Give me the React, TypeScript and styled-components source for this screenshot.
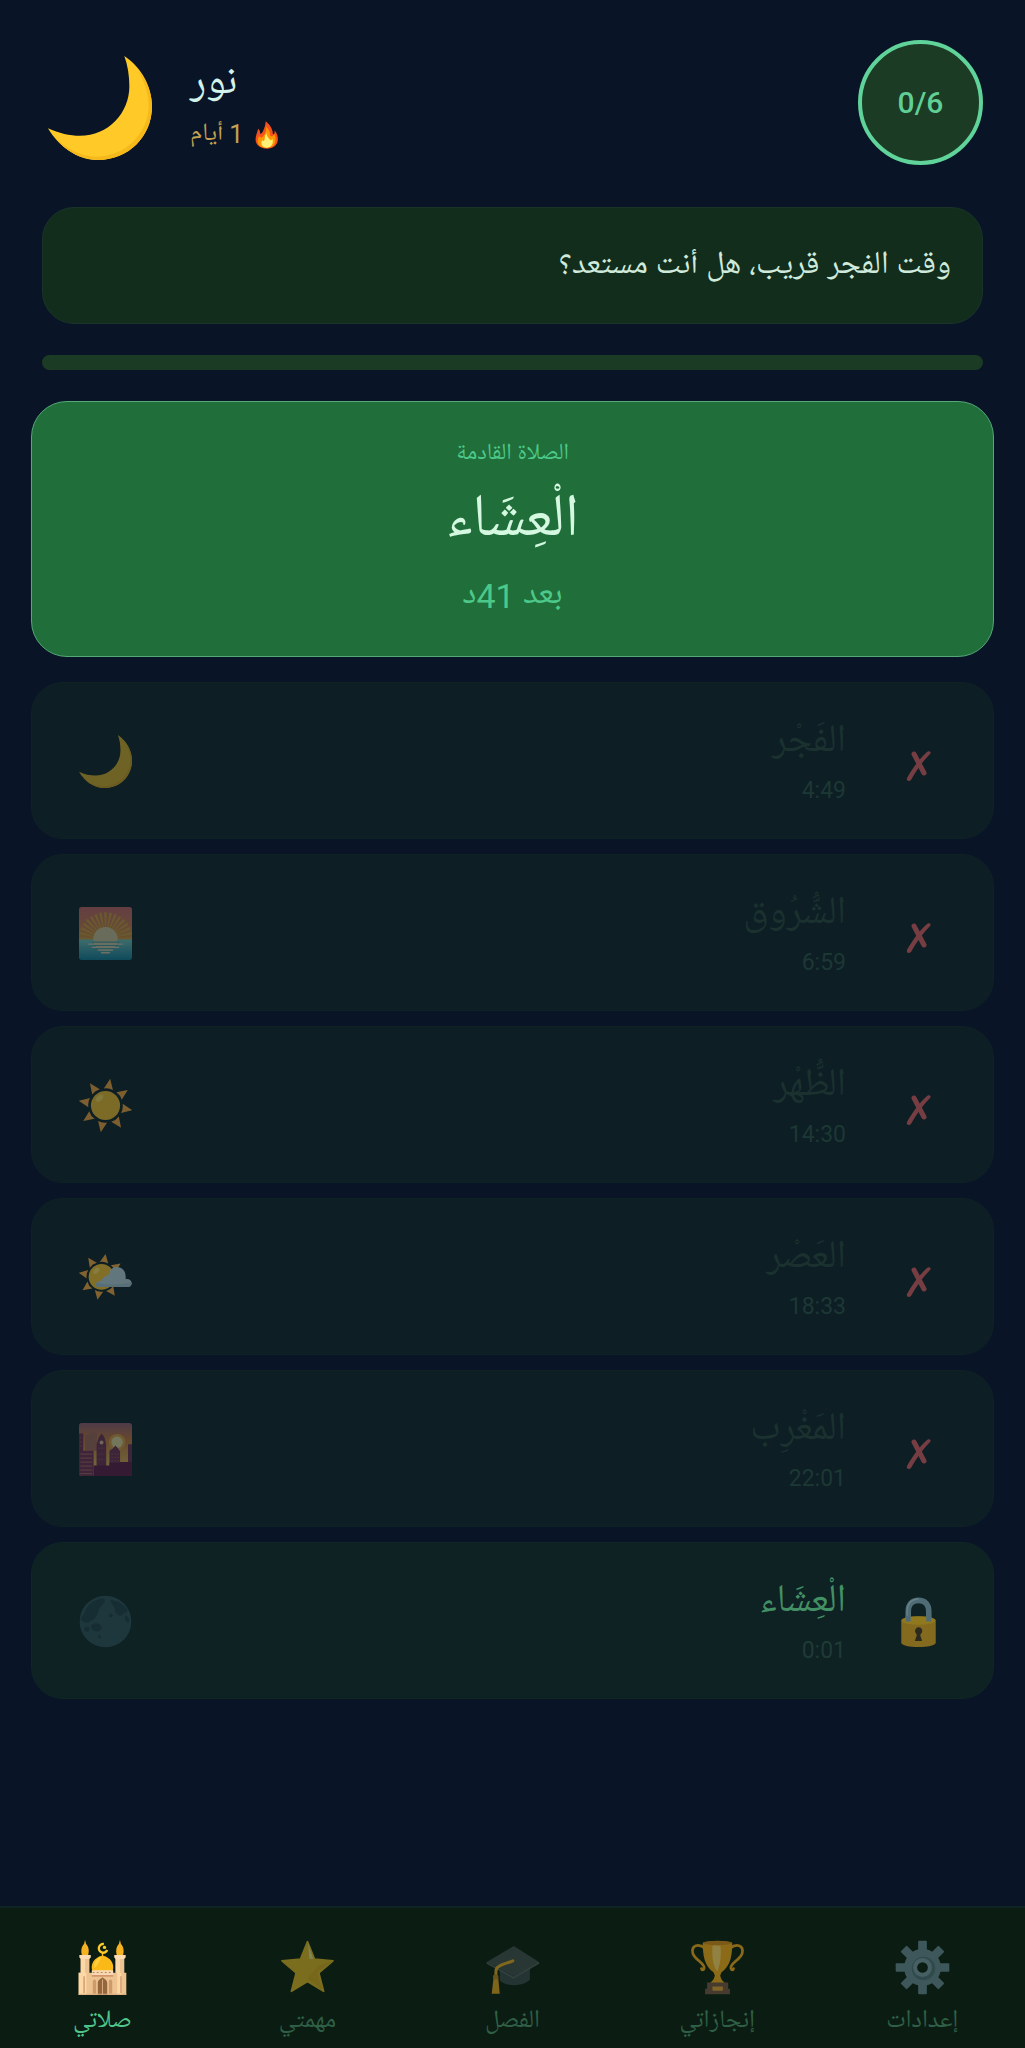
import React from "react";
import styled, { createGlobalStyle } from "styled-components";

const GlobalStyle = createGlobalStyle`
  *, *::before, *::after { box-sizing: border-box; }
  body {
    margin: 0;
    background: #091527;
    font-family: Roboto, "Noto Naskh Arabic UI", "Noto Naskh Arabic", "Noto Sans Arabic", "DejaVu Sans", sans-serif;
  }
  h1, h2, p, ul { margin: 0; padding: 0; font-weight: 400; }
`;

const Screen = styled.div`
  min-height: 100vh;
  display: flex;
  flex-direction: column;
  background: #091527;
`;

const Header = styled.header`
  display: flex;
  align-items: center;
  gap: 38px;
  padding: 40px 42px 42px 48px;
`;

const Avatar = styled.div`
  padding-top: 10px;
`;

const Profile = styled.div`
  flex: 1;
  display: flex;
  flex-direction: column;
  align-items: flex-start;
  padding-top: 8px;
`;

const Name = styled.h1`
  font-size: 42px;
  line-height: 56px;
  color: #d3f2ea;
`;

const Streak = styled.p`
  display: flex;
  align-items: center;
  gap: 10px;
  font-size: 25px;
  line-height: 44px;
  color: #c4a052;
`;

const Counter = styled.div`
  width: 125px;
  height: 125px;
  display: flex;
  align-items: center;
  justify-content: center;
  border: 4px solid #5fd39a;
  border-radius: 50%;
  background: #1b3b24;
  color: #5fcf96;
  font-size: 30px;
  font-weight: 500;
`;

const Bubble = styled.p`
  margin: 0 42px;
  padding: 31px 31px 29px;
  border: 1px solid #1a3329;
  border-radius: 32px;
  background: #132d1d;
  color: #cfeadb;
  font-size: 32px;
  line-height: 55px;
`;

const Progress = styled.div`
  height: 15px;
  margin: 31px 42px;
  border-radius: 8px;
  background: #1b3b24;
`;

const NextCard = styled.section`
  margin: 0 31px 25px;
  padding: 35px 32px 37px;
  display: flex;
  flex-direction: column;
  align-items: center;
  border: 1px solid #55a878;
  border-radius: 36px;
  background: #206e3a;
  color: #4cc98a;
`;

const NextLabel = styled.p`
  font-size: 23px;
  line-height: 36px;
`;

const NextName = styled.h2`
  font-size: 60px;
  line-height: 100px;
  color: #d4f8e0;
`;

const NextTime = styled.p`
  font-size: 34px;
  line-height: 46px;
`;

const PrayerList = styled.ul`
  flex: 1;
  display: flex;
  flex-direction: column;
  gap: 15px;
  padding: 0 31px 100px;
  list-style: none;
`;

const PrayerRow = styled.li<{ $current: boolean }>`
  display: flex;
  align-items: center;
  gap: 44px;
  padding: 31px 47px 29px;
  border: 1px solid ${(p) => (p.$current ? "#0f2623" : "#0e2225")};
  border-radius: 32px;
  background: ${(p) => (p.$current ? "#0e2123" : "#0d1e24")};
`;

const PrayerText = styled.div`
  flex: 1;
  display: flex;
  flex-direction: column;
  text-align: right;
`;

const PrayerName = styled.h2<{ $current: boolean }>`
  font-size: 39px;
  line-height: 59px;
  color: ${(p) => (p.$current ? "#439065" : "#1a312f")};
`;

const PrayerTime = styled.p<{ $current: boolean }>`
  font-size: 23px;
  line-height: 36px;
  color: ${(p) => (p.$current ? "#1e3b36" : "#1c3834")};
`;

const Mark = styled.span`
  width: 56px;
  display: flex;
  justify-content: center;
  align-items: center;
  padding-top: 3px;
`;

const NavBar = styled.nav`
  display: flex;
  padding: 32px 0 3px;
  border-top: 2px solid #0e2422;
  background: #0b1d12;
`;

const NavItem = styled.button<{ $active: boolean }>`
  flex: 1;
  display: flex;
  flex-direction: column;
  align-items: center;
  gap: 4px;
  padding: 0;
  border: 0;
  background: none;
  font: inherit;
  font-size: 25px;
  line-height: 46px;
  color: ${(p) => (p.$active ? "#4fc78c" : "#2f5f46")};
`;

const Art = styled.svg<{ $size: number; $opacity?: number }>`
  display: block;
  flex: none;
  width: ${(p) => p.$size}px;
  height: ${(p) => p.$size}px;
  opacity: ${(p) => p.$opacity ?? 1};
`;

type IconProps = { size?: number; opacity?: number };

const Moon = ({ size = 53, opacity }: IconProps) => (
  <Art $size={size} $opacity={opacity} viewBox="0 0 124 124" aria-hidden="true">
    <path fill="#ffca28" d="M91 0C111 13 124 36 124 60C124 96 96 124 60 124C35 124 13 108 0 86C13 92 26 95 38 95C72 95 97 68 97 36C97 23 95 11 91 0Z" />
    <path fill="#f6b91c" d="M107 17C118 29 124 44 124 60C124 96 96 124 60 124C39 124 20 113 8 97C22 111 39 120 58 120C92 120 119 93 120 60C120 44 115 30 107 17Z" />
  </Art>
);

const Fire = ({ size = 28 }: IconProps) => (
  <Art $size={size} viewBox="0 0 88 88" aria-hidden="true">
    <path fill="#f4511e" d="M40 1C47 7 58 17 61 31C63 36 61 41 64 42C68 41 69 34 67 29C76 38 79 50 78 60C77 77 63 87 44 87C24 87 9 77 8 59C8 45 14 36 16 24C22 29 23 35 22 40C26 41 29 37 31 33C35 24 39 15 40 1Z" />
    <path fill="#ff9800" d="M41 17C49 26 54 34 54 46C58 51 63 48 67 42C73 54 72 70 63 78C52 87 31 87 21 78C13 70 14 57 19 47C22 52 26 53 29 50C37 43 43 34 41 17Z" />
    <path fill="#fff176" d="M42 37C43 50 49 52 54 60C57 62 59 59 61 56C65 68 60 83 44 84C28 84 23 72 29 60C31 65 35 64 36 60C38 53 37 45 42 37Z" />
  </Art>
);

const Sunrise = ({ opacity }: IconProps) => (
  <Art $size={53} $opacity={opacity} viewBox="0 0 160 160" aria-hidden="true">
    <defs>
      <linearGradient id="dawnSky" x1="0" y1="0" x2="0" y2="1">
        <stop offset="0" stopColor="#dd6a70" />
        <stop offset="1" stopColor="#e9963c" />
      </linearGradient>
      <linearGradient id="dawnSea" x1="0" y1="0" x2="0" y2="1">
        <stop offset="0" stopColor="#80d8d0" />
        <stop offset="1" stopColor="#1287a8" />
      </linearGradient>
      <clipPath id="dawnFrame"><rect width="160" height="160" rx="8" /></clipPath>
    </defs>
    <g clipPath="url(#dawnFrame)">
      <rect width="160" height="100" fill="url(#dawnSky)" />
      {Array.from({ length: 17 }, (_, i) => (
        <path key={i} fill="#e6ad3c" d="M80 97L76 16L84 16Z" transform={`rotate(${-88 + i * 11} 80 97)`} />
      ))}
      <rect y="98" width="160" height="62" fill="url(#dawnSea)" />
      <circle cx="80" cy="97" r="37" fill="#e8d9a8" />
      <path stroke="#4fb0b0" strokeWidth="4" d="M40 106H120M42 116H118M50 126H110M62 134H98" />
      <path stroke="#efe2c0" strokeWidth="4" strokeLinecap="round" d="M28 112H132M40 122H120M58 130H102M68 138H92" />
    </g>
  </Art>
);

const Rays = ({ cx, cy, inner, outer, half }: { cx: number; cy: number; inner: number; outer: number; half: number }) => (
  <>
    {Array.from({ length: 8 }, (_, i) => (
      <path
        key={i}
        fill="#f5a53c"
        d={`M${cx} ${cy - outer}L${cx + half} ${cy - inner}Q${cx} ${cy - inner - 5} ${cx - half} ${cy - inner}Z`}
        transform={`rotate(${10 + i * 45} ${cx} ${cy})`}
      />
    ))}
  </>
);

const Sun = ({ opacity }: IconProps) => (
  <Art $size={53} $opacity={opacity} viewBox="0 0 160 160" aria-hidden="true">
    <Rays cx={80} cy={80} inner={50} outer={82} half={14} />
    <circle cx="80" cy="80" r="44" fill="#f5be2b" />
    <ellipse cx="62" cy="58" rx="13" ry="8" fill="#ffdc58" transform="rotate(-45 62 58)" />
  </Art>
);

const SunCloud = ({ opacity }: IconProps) => (
  <Art $size={53} $opacity={opacity} viewBox="0 0 160 160" aria-hidden="true">
    <Rays cx={68} cy={78} inner={43} outer={70} half={13} />
    <circle cx="68" cy="78" r="39" fill="#f5be2b" />
    <ellipse cx="52" cy="60" rx="11" ry="7" fill="#ffdc58" transform="rotate(-45 52 60)" />
    <path fill="#b5ced6" d="M60 109C48 109 46 96 58 93C66 91 69 87 74 80C80 76 86 74 90 71C92 54 106 46 119 49C134 51 142 63 141 85C152 83 160 90 159 99C158 106 153 109 146 109Z" />
    <path fill="#a3bfc9" d="M60 109C50 109 46 100 54 95C80 104 120 103 158 94C160 102 155 109 146 109Z" />
  </Art>
);

const CitySunset = ({ opacity }: IconProps) => (
  <Art $size={53} $opacity={opacity} viewBox="0 0 160 160" aria-hidden="true">
    <defs>
      <linearGradient id="duskSky" x1="0" y1="0" x2="0" y2="1">
        <stop offset="0" stopColor="#a8627c" />
        <stop offset="0.3" stopColor="#e0813c" />
        <stop offset="0.8" stopColor="#f9c355" />
      </linearGradient>
      <clipPath id="duskFrame"><rect width="160" height="160" rx="8" /></clipPath>
    </defs>
    <g clipPath="url(#duskFrame)">
      <rect width="160" height="160" fill="url(#duskSky)" />
      <circle cx="115" cy="58" r="25" fill="#f8ab48" />
      <circle cx="115" cy="58" r="17" fill="#fff0a5" />
      <path fill="#b9705c" d="M18 36H30V28H54V84H18Z" />
      <path fill="#812f58" d="M0 32H13V84H44V160H0ZM53 160V64L60 43L68 32L77 43L82 64V160ZM92 160V84L102 77L110 68L118 77L124 86V160ZM148 160V64H160V160Z" />
      <path fill="#6a1648" d="M44 128H92V160H44ZM124 118H160V160H124ZM92 120H124V160H92Z" />
      <path stroke="#d0746a" strokeWidth="3" d="M4 94H40M4 106H40M4 118H40M4 130H40M4 142H40M4 153H40" />
      <path stroke="#b95c65" strokeWidth="3" strokeDasharray="4 5" d="M98 94H120M98 104H120M98 114H120M59 76H78M59 94H78M59 110H78M3 45H12M3 57H12M3 69H12" />
      <circle cx="68" cy="59" r="6" fill="#f5c5a0" />
    </g>
  </Art>
);

const NewMoon = ({ opacity }: IconProps) => (
  <Art $size={53} $opacity={opacity} viewBox="0 0 160 160" aria-hidden="true">
    <circle cx="80" cy="80" r="78" fill="#345a66" />
    <path fill="#24424c" d="M18 49C25 27 50 10 76 10C83 20 72 27 66 35C58 42 61 55 51 65C48 76 38 74 32 82C22 86 9 82 5 73ZM94 16C112 14 136 27 147 45C145 56 134 51 130 62C122 66 113 57 108 48C112 37 98 32 94 16ZM40 88C51 82 68 88 69 98C68 108 54 114 45 107C37 102 34 94 40 88ZM139 63C148 62 155 75 150 84C142 84 136 74 139 63Z" />
    <circle cx="24" cy="103" r="8" fill="#24424c" />
    <circle cx="96" cy="62" r="6" fill="#24424c" />
    <circle cx="62" cy="126" r="5" fill="#24424c" />
  </Art>
);

const Lock = ({ opacity }: IconProps) => (
  <Art $size={53} $opacity={opacity} viewBox="0 0 160 160" aria-hidden="true">
    <path fill="none" stroke="#7fa3b3" strokeWidth="17" d="M49 78V43C49 22 61 10 80 10C99 10 111 22 111 43V78" />
    <path fill="none" stroke="#a9c8d4" strokeWidth="4" d="M46 68V42C46 20 59 6 80 6" />
    <path fill="#d9a01c" d="M28 71C28 55 132 55 132 71V138C132 155 28 155 28 138Z" />
    <ellipse cx="80" cy="71" rx="51" ry="13" fill="#edb81c" />
    <path fill="none" stroke="#7fa3b3" strokeWidth="15" d="M49 56V74M111 56V74" />
    <path fill="#43301d" d="M70 106A11 11 0 1 1 90 108L85 115L91 133H69L75 115Z" />
  </Art>
);

const Cross = () => (
  <Art $size={40} viewBox="0 0 40 40" role="img" aria-label="✗">
    <path fill="none" stroke="#763e43" strokeWidth="5" strokeLinecap="round" d="M16 11L26 30" />
    <path fill="#763e43" d="M29 9C31 7 34 9 32 11C24 19 18 28 13 37C11 39 8 38 9 35C14 26 21 16 29 9Z" />
  </Art>
);

const Mosque = () => (
  <Art $size={55} viewBox="0 0 164 164" aria-hidden="true">
    <path fill="#ecc391" d="M17 50H43V98H121V50H147V98H153V164H11V98H17Z" />
    <path fill="#fbd8a6" d="M17 50H30V98H34V164H11V98H17ZM121 50H134V98H138V164H126V98H121Z" />
    <path fill="#f5b324" d="M30 0L33 12C41 19 43 33 39 46H21C17 33 19 19 27 12ZM134 0L137 12C145 19 147 33 143 46H125C121 33 123 19 131 12Z" />
    <path fill="#fbdcb4" d="M13 45H47V52L42 57H18L13 52ZM117 45H151V52L146 57H122L117 52Z" />
    <path fill="#fbb917" d="M80 38H84V47C106 52 120 72 112 94H52C44 72 58 52 80 47Z" />
    <path fill="#ffcf3c" d="M78 50C62 56 54 70 58 84C65 77 72 68 78 50Z" />
    <path fill="none" stroke="#ffca28" strokeWidth="7" d="M86 12A13 13 0 1 0 96 30" />
    <circle cx="88" cy="22" r="5" fill="#ffca28" />
    <path fill="#f8d8b0" d="M50 90H114V107H50Z" />
    <path stroke="#b48255" strokeWidth="3" strokeDasharray="5 7" d="M53 97H112" />
    <path stroke="#bf6e4a" strokeWidth="3" d="M50 107H114" />
    <path fill="#cf9a6a" d="M53 124C53 116 63 116 63 124V160H53ZM101 124C101 116 111 116 111 124V160H101ZM25 108H29V158H25ZM135 108H139V158H135Z" />
    <path fill="#94663e" d="M68 164V128C68 118 77 117 82 111C87 117 96 118 96 128V164Z" />
    <path stroke="#d9aa80" strokeWidth="3" d="M82 118V164M11 162H153" />
  </Art>
);

const Star = () => (
  <Art $size={55} $opacity={0.48} viewBox="0 0 164 164" aria-hidden="true">
    <path fill="#f4c52a" stroke="#f4c52a" strokeWidth="5" strokeLinejoin="round" d="M82 5L103 57L158 62L116 98L130 153L82 124L34 153L48 98L6 62L61 57Z" />
    <path fill="#fff3a0" d="M84 10L99 57L87 56Z" />
    <path fill="#dca51d" d="M154 65L109 98L126 148L82 115L116 75Z" opacity="0.4" />
  </Art>
);

const Cap = () => (
  <Art $size={55} $opacity={0.55} viewBox="0 0 164 164" aria-hidden="true">
    <path fill="#37474f" d="M44 75V120C59 140 117 140 134 117V68Z" />
    <path fill="#404b50" d="M86 18L162 66L90 108L4 66Z" />
    <path fill="none" stroke="#566167" strokeWidth="4" d="M5 68L85 113L161 68" />
    <path fill="none" stroke="#e0a526" strokeWidth="9" strokeLinecap="round" d="M83 62C66 70 37 74 33 89L32 112" />
    <path fill="#dfa024" d="M26 108H39L44 160H20Z" />
    <circle cx="32" cy="110" r="8" fill="#b78322" />
  </Art>
);

const Trophy = () => (
  <Art $size={55} $opacity={0.55} viewBox="0 0 164 164" aria-hidden="true">
    <path fill="none" stroke="#f1a71f" strokeWidth="8" strokeLinecap="round" d="M45 25C25 8 4 17 8 38C11 58 47 70 42 85C40 91 35 91 34 85M119 25C139 8 160 17 156 38C153 58 117 70 122 85C124 91 129 91 130 85" />
    <path fill="#f5a91d" d="M38 8C60 0 104 0 126 8C126 46 121 77 94 96L90 106C92 116 96 122 104 128H60C68 122 72 116 74 106L70 96C43 77 38 46 38 8Z" />
    <path fill="#ffd46b" d="M67 17C77 16 84 16 91 18C94 50 89 77 81 94C68 77 65 48 67 17Z" />
    <ellipse cx="82" cy="9" rx="43" ry="6" fill="#d58a20" />
    <path fill="#795548" d="M51 127H114V145H119V162H45V145H51Z" />
    <rect x="67" y="139" width="31" height="12" rx="2" fill="#dea03b" />
  </Art>
);

const Gear = () => (
  <Art $size={55} $opacity={0.6} viewBox="0 0 164 164" aria-hidden="true">
    <g fill="#5f7e8a">
      {Array.from({ length: 8 }, (_, i) => (
        <rect key={i} x="69" y="2" width="26" height="44" rx="3" transform={`rotate(${i * 45} 82 82)`} />
      ))}
    </g>
    <circle cx="82" cy="82" r="36" fill="none" stroke="#5f7e8a" strokeWidth="38" />
    <circle cx="85" cy="85" r="28" fill="none" stroke="#4a6873" strokeWidth="14" />
    <circle cx="82" cy="82" r="22" fill="none" stroke="#6d8c98" strokeWidth="12" />
  </Art>
);

const prayers = [
  { name: "الفَجْر", time: "4:49", icon: <Moon opacity={0.4} /> },
  { name: "الشُّرُوق", time: "6:59", icon: <Sunrise opacity={0.42} /> },
  { name: "الظُّهْر", time: "14:30", icon: <Sun opacity={0.48} /> },
  { name: "العَصْر", time: "18:33", icon: <SunCloud opacity={0.5} /> },
  { name: "المَغْرِب", time: "22:01", icon: <CitySunset opacity={0.42} /> },
  { name: "الْعِشَاء", time: "0:01", icon: <NewMoon opacity={0.4} />, current: true },
];

const tabs = [
  { label: "صلاتي", icon: <Mosque /> },
  { label: "مهمتي", icon: <Star /> },
  { label: "الفصل", icon: <Cap /> },
  { label: "إنجازاتي", icon: <Trophy /> },
  { label: "إعدادات", icon: <Gear /> },
];

export default function App() {
  const [active, setActive] = React.useState(0);
  return (
    <Screen lang="ar">
      <GlobalStyle />
      <Header>
        <Avatar>
          <Moon size={104} />
        </Avatar>
        <Profile>
          <Name dir="rtl">نور</Name>
          <Streak dir="rtl">
            <Fire />
            <span>1 أيام</span>
          </Streak>
        </Profile>
        <Counter>0/6</Counter>
      </Header>
      <Bubble dir="rtl">وقت الفجر قريب، هل أنت مستعد؟</Bubble>
      <Progress role="progressbar" aria-valuemin={0} aria-valuemax={6} aria-valuenow={0} />
      <NextCard dir="rtl">
        <NextLabel>الصلاة القادمة</NextLabel>
        <NextName>الْعِشَاء</NextName>
        <NextTime>بعد 41د</NextTime>
      </NextCard>
      <PrayerList>
        {prayers.map((p) => (
          <PrayerRow key={p.time} $current={!!p.current}>
            {p.icon}
            <PrayerText>
              <PrayerName $current={!!p.current}>{p.name}</PrayerName>
              <PrayerTime $current={!!p.current}>{p.time}</PrayerTime>
            </PrayerText>
            <Mark>{p.current ? <Lock opacity={0.58} /> : <Cross />}</Mark>
          </PrayerRow>
        ))}
      </PrayerList>
      <NavBar>
        {tabs.map((t, i) => (
          <NavItem key={t.label} type="button" $active={i === active} onClick={() => setActive(i)}>
            {t.icon}
            <span>{t.label}</span>
          </NavItem>
        ))}
      </NavBar>
    </Screen>
  );
}
